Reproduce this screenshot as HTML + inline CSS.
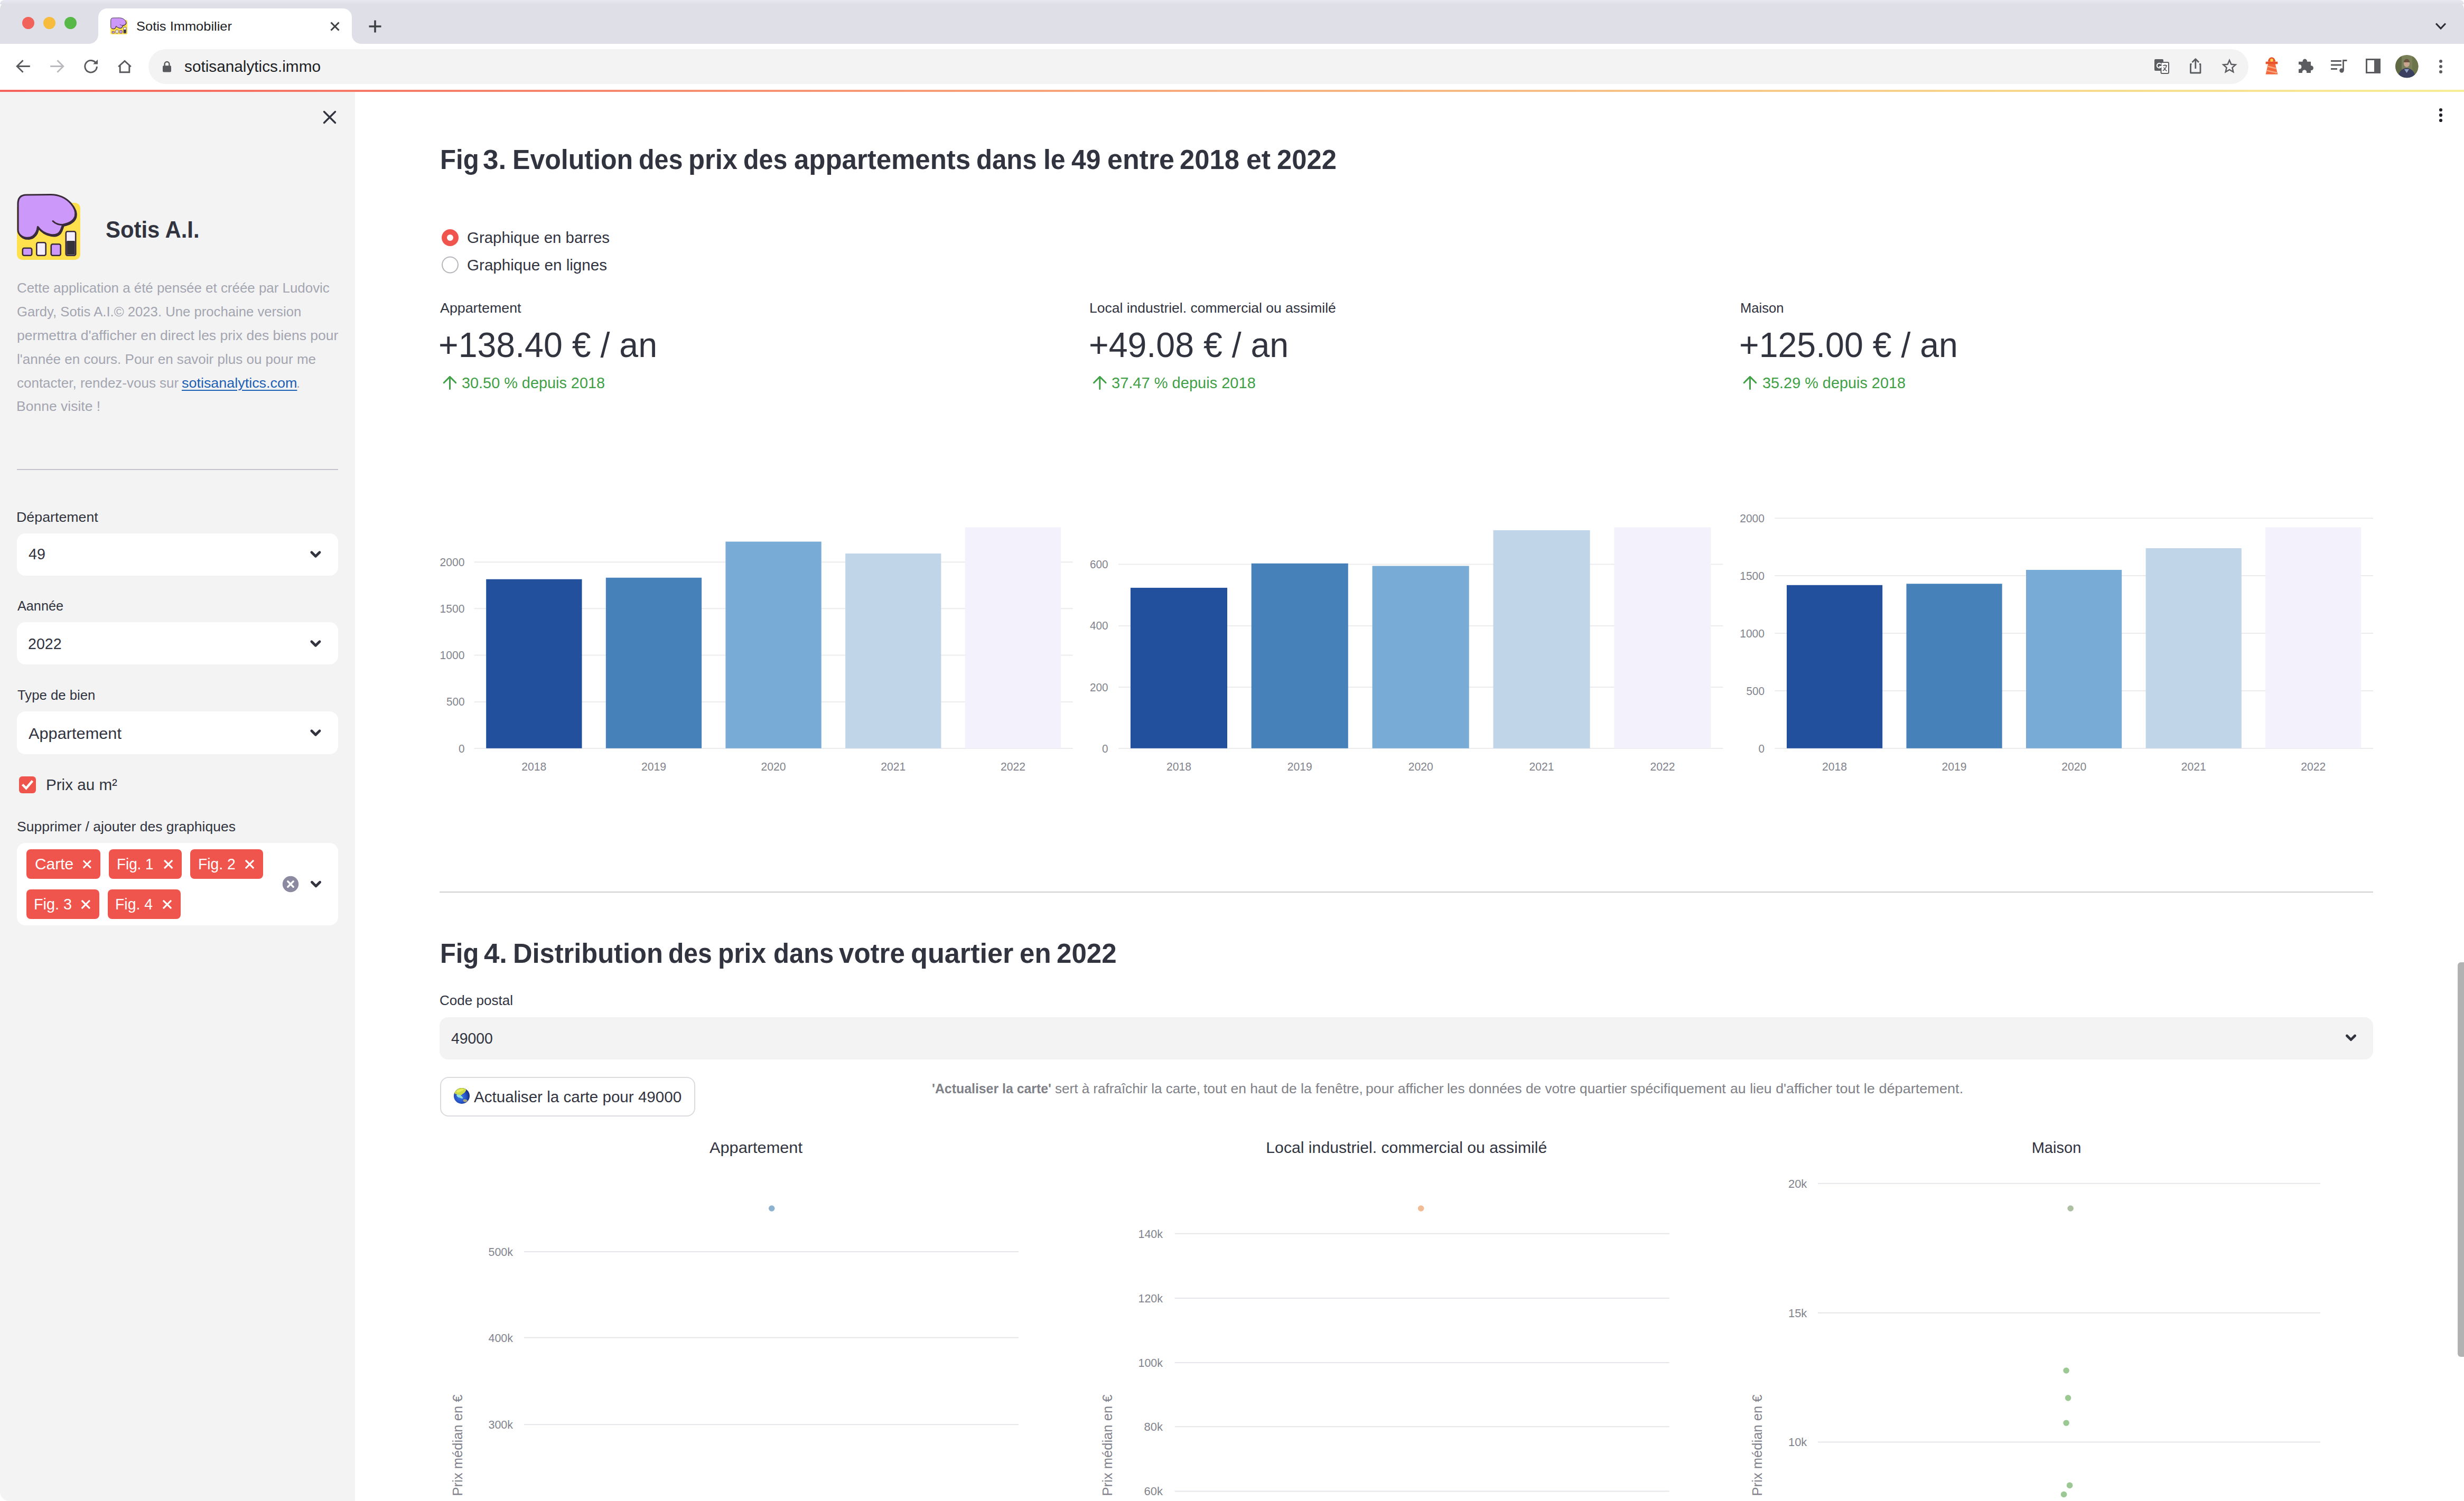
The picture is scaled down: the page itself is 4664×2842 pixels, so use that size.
<!DOCTYPE html>
<html lang="fr"><head><meta charset="utf-8"><meta name="viewport" content="width=4664"><title>Sotis Immobilier</title>
<style>
html,body{margin:0;padding:0}
body{width:4664px;height:2842px;position:relative;overflow:hidden;background:#fff;font-family:"Liberation Sans",sans-serif;color:#31333f}
div,span,svg,a{box-sizing:border-box}
.a{position:absolute}
.t{position:absolute;white-space:pre;line-height:1;transform-origin:0 0;display:block}
.t b{font-weight:700}
.lk{color:#1c60b3;text-decoration:underline;text-decoration-thickness:2px;text-underline-offset:4px}
.tabstrip{left:0;top:0;width:4664px;height:83px;background:#dfdfe8;border-radius:18px 18px 0 0}
.tabstrip:before{content:"";position:absolute;left:0;top:0;width:100%;height:8px;border-radius:18px 18px 0 0;background:linear-gradient(#e9e8f2,#dfdfe8)}
.tab{left:186px;top:16px;width:480px;height:67px;background:#fff;border-radius:17px 17px 0 0}
.tab:before,.tab:after{content:"";position:absolute;bottom:0;width:17px;height:17px;background:radial-gradient(circle at 0 0,transparent 16.5px,#fff 17px)}
.tab:before{left:-17px}
.tab:after{right:-17px;background:radial-gradient(circle at 100% 0,transparent 16.5px,#fff 17px)}
.tl{width:23px;height:23px;border-radius:50%;top:31.5px}
.toolbar{left:0;top:83px;width:4664px;height:87px;background:#fff}
.url{left:281px;top:93px;width:3975px;height:66px;border-radius:33px;background:#f3f3f4}
.deco{left:0;top:170px;width:4664px;height:4px;background:linear-gradient(90deg,#f5635c,#f7a078 40%,#f7ee96)}
.sidebar{left:0;top:174px;width:672px;height:2668px;background:#f3f3f3;border-radius:0 0 0 18px}
.hr{height:2px}
.sel{left:32px;width:608px;height:80.6px;border-radius:16px;background:#fff}
.tag{height:56px;border-radius:8px;background:#f0554d}
.msel{left:32px;top:1596px;width:608px;height:155.5px;border-radius:16px;background:#fff}
.psel{left:832px;top:1926.4px;width:3660px;height:79.2px;border-radius:16px;background:#f3f3f4}
.btn{left:832.5px;top:2039.2px;width:483px;height:74.8px;border-radius:16px;border:2px solid #dadbdf;background:#fff}
.cb{left:36px;top:1470px;width:32px;height:32px;border-radius:6px;background:#f0554d}
.sb{left:4652px;top:1822px;width:12px;height:747px;border-radius:6px 0 0 6px;background:#b2b2b2}
svg.icons,svg.charts{position:absolute;left:0;top:0;overflow:visible}

</style></head>
<body>
<div class="a tabstrip"></div>
<div class="a tl" style="left:42px;background:#f1625a"></div>
<div class="a tl" style="left:81.5px;background:#f7bb3e"></div>
<div class="a tl" style="left:122px;background:#57b848"></div>
<div class="a tab"></div>
<div class="a toolbar"></div>
<div class="a url"></div>
<div class="a deco"></div>
<div class="a sidebar"></div>
<div class="a hr" style="left:32px;top:887.8px;width:608px;background:#c3c2cd"></div>
<div class="a sel" style="top:1009.7px"></div>
<div class="a sel" style="top:1177.9px"></div>
<div class="a sel" style="top:1347px"></div>
<div class="a cb"></div>
<div class="a msel"></div>
<div class="a tag" style="left:50.2px;top:1608px;width:139.7px"></div>
<div class="a tag" style="left:205.9px;top:1608px;width:138px"></div>
<div class="a tag" style="left:360.1px;top:1608px;width:138px"></div>
<div class="a tag" style="left:50.2px;top:1684px;width:138px"></div>
<div class="a tag" style="left:204.2px;top:1684px;width:137.5px"></div>
<div class="a hr" style="left:832px;top:1687.9px;width:3660px;background:#cfcfd2"></div>
<div class="a psel"></div>
<div class="a btn"></div>
<div class="a sb"></div>
<svg class="icons" width="4664" height="2842" viewBox="0 0 4664 2842" fill="none">
<defs>
<g id="logo">
 <rect x="0" y="18" width="120" height="108" rx="10" fill="#ffe14e"/>
 <path d="M2 20 C2 8 8 3 18 3 L64 2.5 C78 2.5 92 8 102 19 C109 27 112 36 110.5 43 C108 52 100 57 87 59.5 C85 64 84.5 69 81 73.5 C77 78.5 70 79.5 64 78.5 C54 77 45 71 39.5 63.5 C39 69 37 76.5 30 81.5 C24 85.5 14 85.5 8 80.5 C3 77 2 73 2 69 Z" transform="translate(1.3 1.9)" fill="#3a2b3a" stroke="#3a2b3a" stroke-width="3.2" stroke-linejoin="round"/>
 <path d="M2 20 C2 8 8 3 18 3 L64 2.5 C78 2.5 92 8 102 19 C109 27 112 36 110.5 43 C108 52 100 57 87 59.5 C85 64 84.5 69 81 73.5 C77 78.5 70 79.5 64 78.5 C54 77 45 71 39.5 63.5 C39 69 37 76.5 30 81.5 C24 85.5 14 85.5 8 80.5 C3 77 2 73 2 69 Z" fill="#cc99fa" stroke="#3a2b3a" stroke-width="3.2" stroke-linejoin="round"/>
 <path d="M89 59.3 C81 60.5 72.500 57.500 68 52.500" stroke="#3a2b3a" stroke-width="3" stroke-linecap="round"/>
 <rect x="10.8" y="103.800" width="17.400" height="13.900" rx="3" fill="#cc99fa" stroke="#3a2b3a" stroke-width="2.6"/>
 <rect x="37.300" y="93.300" width="17.400" height="24.400" rx="3" fill="#f4eefd" stroke="#3a2b3a" stroke-width="2.6"/>
 <rect x="64.800" y="96.300" width="17.900" height="21.400" rx="3" fill="#cc99fa" stroke="#3a2b3a" stroke-width="2.6"/>
 <rect x="92.800" y="72.300" width="18.400" height="45.400" rx="3" fill="#f4eefd" stroke="#3a2b3a" stroke-width="2.6"/>
 <rect x="94.200" y="90" width="15.600" height="26.300" rx="1.5" fill="#35323a"/>
</g>
<g id="chev"><path d="M-7.6 -3.8 L0 3.8 L7.6 -3.8" stroke="#31333f" stroke-width="4.8" stroke-linecap="round" stroke-linejoin="round"/></g>
<g id="tagx"><path d="M-6.5 -6.5 L6.5 6.5 M6.5 -6.5 L-6.5 6.5" stroke="#fff" stroke-width="3.2" stroke-linecap="square"/></g>
<g id="up"><path d="M0 11.6 V-11.5 M-11.3 -0.3 L0 -11.6 L11.3 -0.3" stroke="#3fa046" stroke-width="3" stroke-linecap="round" stroke-linejoin="round"/></g>
</defs>
<!-- favicon -->
<use href="#logo" transform="translate(209.2 33.2) scale(0.266 0.252)"/>
<!-- tab close / new tab / tab search -->
<path d="M626.5 42.5 L641.5 57.5 M641.5 42.5 L626.5 57.5" stroke="#3c4043" stroke-width="3"/>
<path d="M698.5 50 H721.5 M710 38.5 V61.5" stroke="#3c4043" stroke-width="3.6"/>
<path d="M4611 44.5 L4620 54 L4629 44.5" stroke="#2b2c34" stroke-width="3.2"/>
<!-- nav icons -->
<path d="M56.8 125.5 H32.6 M43.6 114.2 L32.2 125.5 L43.6 136.8" stroke="#58595c" stroke-width="2.9" stroke-linejoin="miter"/>
<path d="M95.2 125.5 H119.4 M108.4 114.2 L119.8 125.5 L108.4 136.8" stroke="#b9babd" stroke-width="2.9"/>
<path d="M181.6 119.6 A11.3 11.3 0 1 0 183.4 126" stroke="#58595c" stroke-width="2.9"/>
<path d="M185 112.8 V121.6 H176.2 Z" fill="#58595c"/>
<path d="M224.2 126.2 L236 115.4 L247.800 126.2 M227.200 124 V136.800 H244.800 V124" stroke="#58595c" stroke-width="2.9" stroke-linejoin="miter"/>
<!-- lock -->
<rect x="308" y="124.3" width="16" height="12.2" rx="2" fill="#58595c"/>
<path d="M311.6 125 V121.4 A4.4 4.4 0 0 1 320.400 121.4 V125" stroke="#58595c" stroke-width="2.4"/>
<!-- translate -->
<rect x="4078" y="112" width="17" height="22" rx="2" fill="#5b5c60"/>
<rect x="4090.5" y="118" width="14.5" height="21" rx="2" fill="#fff" stroke="#5b5c60" stroke-width="2"/>
<path d="M4094 124 H4102 M4098 122 V124 M4101 124 C4100 129 4097 132 4094 134 M4095.5 127.5 C4097 131 4099 133 4101.500 134.5" stroke="#5b5c60" stroke-width="1.6"/>
<path d="M4090.500 121.5 A4.3 4.3 0 1 0 4091 126 H4087" stroke="#fff" stroke-width="2"/>
<!-- share -->
<path d="M4148.500 121.500 H4146.500 V138 H4165 V121.500 H4163 M4155.800 130 V112 M4149.500 118 L4155.800 111.700 L4162 118" stroke="#5b5c60" stroke-width="2.800" stroke-linejoin="round"/>
<!-- star -->
<path transform="translate(4220 125.6) scale(0.88) translate(-4220 -125.6)" d="M4220 112.500 L4223.800 121.300 L4233.300 122.100 L4226.100 128.400 L4228.300 137.700 L4220 132.800 L4211.700 137.700 L4213.900 128.400 L4206.700 122.100 L4216.200 121.300 Z" stroke="#5b5c60" stroke-width="2.800" stroke-linejoin="miter"/>
<!-- lighthouse ext --><g transform="translate(4300 127) scale(1.08 1.14) translate(-4300 -128.5)">
<path d="M4294 122 H4306 L4310.500 140.500 H4289.500 Z" fill="#f2683a"/>
<path d="M4292 127 L4308 131 M4290.500 134 L4309.500 138" stroke="#f9a57f" stroke-width="2.400"/>
<rect x="4289.500" y="119.500" width="21" height="4" fill="#e8532b"/>
<path d="M4293.500 119.500 A6.500 7.500 0 0 1 4306.500 119.500 Z" fill="#e8532b"/>
<circle cx="4300" cy="117" r="2.600" fill="#fbd54a"/></g>
<!-- puzzle -->
<path transform="translate(0 -2.2) translate(4362 127) scale(1 1.06) translate(-4362 -127)" d="M4351 119.500 H4358.500 A4.300 4.300 0 1 1 4367 119.500 H4374 V126.500 A4.300 4.300 0 1 1 4374 135 V139.500 H4366 A4.200 4.200 0 1 0 4358 139.500 H4351 V132.500 A4.200 4.200 0 1 0 4351 124.500 Z" fill="#5b5c60"/>
<!-- media -->
<path d="M4412 115.500 H4432 M4412 123 H4432 M4412 130.500 H4424" stroke="#5b5c60" stroke-width="2.800"/>
<path d="M4435.500 133 V114.500 H4442.500" stroke="#5b5c60" stroke-width="2.800"/>
<circle cx="4432.500" cy="133.500" r="4.200" fill="#5b5c60"/>
<!-- side panel -->
<rect x="4479.500" y="112.500" width="25" height="25" stroke="#5b5c60" stroke-width="3"/>
<rect x="4494" y="112.500" width="10.500" height="25" fill="#5b5c60"/>
<!-- avatar -->
<clipPath id="av"><circle cx="4555.800" cy="125.600" r="21.700"/></clipPath>
<g clip-path="url(#av)">
 <rect x="4534" y="103" width="44" height="46" fill="#7a8158"/>
 <rect x="4534" y="103" width="12" height="46" fill="#5f6a45"/><rect x="4566" y="103" width="12" height="46" fill="#6b7549"/>
 <ellipse cx="4555.500" cy="146" rx="16" ry="17" fill="#3a3f60"/>
 <ellipse cx="4555.500" cy="120" rx="5.600" ry="7" fill="#c9a690"/><path d="M4551 131 L4555.500 138 L4560 131 Z" fill="#8fa3c8"/>
 <path d="M4549.900 118 A5.600 6.500 0 0 1 4561.100 118 Z" fill="#6a5340"/>
</g>
<!-- chrome menu -->
<circle cx="4620" cy="116" r="3" fill="#5b5c60"/><circle cx="4620" cy="126" r="3" fill="#5b5c60"/><circle cx="4620" cy="136" r="3" fill="#5b5c60"/>
<!-- streamlit menu -->
<circle cx="4620" cy="208" r="3.1" fill="#222328"/><circle cx="4620" cy="217.900" r="3.1" fill="#222328"/><circle cx="4620" cy="228" r="3.1" fill="#222328"/>
<!-- sidebar close -->
<path d="M613.500 211.500 L634.500 232.500 M634.500 211.500 L613.500 232.500" stroke="#31333f" stroke-width="3.400" stroke-linecap="round"/>
<!-- logo -->
<use href="#logo" transform="translate(32 366)"/>
<!-- select chevrons -->
<use href="#chev" transform="translate(597.4 1049.5)"/>
<use href="#chev" transform="translate(597.4 1218.500)"/>
<use href="#chev" transform="translate(597.4 1387.500)"/>
<use href="#chev" transform="translate(598 1674)"/>
<use href="#chev" transform="translate(4450 1964.800)"/>
<!-- checkbox check -->
<path d="M42.500 1485.500 L49.500 1492.500 L61.500 1478.500" stroke="#fff" stroke-width="4.400" stroke-linecap="butt" stroke-linejoin="miter"/>
<!-- tag x -->
<use href="#tagx" transform="translate(164.800 1636.400) scale(0.92)"/>
<use href="#tagx" transform="translate(318.700 1636.400)"/>
<use href="#tagx" transform="translate(472.500 1636.400)"/>
<use href="#tagx" transform="translate(162.300 1712.400)"/>
<use href="#tagx" transform="translate(316.500 1712.400)"/>
<!-- clear all -->
<circle cx="550" cy="1674" r="15.200" fill="#8b8aa0"/>
<path d="M544.800 1668.800 L555.200 1679.200 M555.200 1668.800 L544.800 1679.200" stroke="#fff" stroke-width="3.400" stroke-linecap="round"/>
<!-- radios -->
<circle cx="852" cy="450" r="16" fill="#f0554d"/><circle cx="852" cy="450" r="6" fill="#fff"/>
<circle cx="852" cy="501.500" r="15" fill="#fff" stroke="#b4b5ba" stroke-width="2"/>
<!-- delta arrows -->
<use href="#up" transform="translate(851.500 725)"/>
<use href="#up" transform="translate(2081.800 725)"/>
<use href="#up" transform="translate(3312.500 725)"/>
<!-- globe -->
<radialGradient id="gl" cx="0.42" cy="0.55" r="0.62"><stop offset="0" stop-color="#3f7fe8"/><stop offset="0.6" stop-color="#2450c4"/><stop offset="1" stop-color="#15256f"/></radialGradient>
<clipPath id="gc"><circle cx="874" cy="2075" r="15"/></clipPath>
<circle cx="874" cy="2075" r="15" fill="url(#gl)"/>
<g clip-path="url(#gc)">
<path d="M860 2069 C861 2063 868 2059 875 2059.500 C880 2060 883 2062 882 2065 C880 2068 879 2070 876 2071 C873 2073 872 2076 869 2075 C866 2074 865 2071 862 2071.500 Z" fill="#c9d94a"/>
<path d="M864 2066 C868 2062 875 2061 879 2063 C876 2066 870 2067 866 2069 Z" fill="#e8ee5a"/>
<path d="M864 2073 C867 2072 871 2073 873 2075 C875 2077 877 2078 876 2080 C873 2080 871 2078 868 2078 C866 2077 864 2075 864 2073 Z" fill="#8fe0d8"/>
<path d="M877 2082 C880 2080.500 884 2081.500 884.500 2084 C884 2086.500 880 2087.500 878 2086 C876.500 2085 876 2083 877 2082 Z" fill="#a9a77a"/>
</g>
</svg>

<svg class="charts" width="4664" height="2842" viewBox="0 0 4664 2842" font-family="'Liberation Sans', sans-serif">
<line x1="897.5" x2="2030.7" y1="1064.3" y2="1064.3" stroke="#ebebee" stroke-width="2"/>
<line x1="897.5" x2="2030.7" y1="1152.2" y2="1152.2" stroke="#ebebee" stroke-width="2"/>
<line x1="897.5" x2="2030.7" y1="1240.6" y2="1240.6" stroke="#ebebee" stroke-width="2"/>
<line x1="897.5" x2="2030.7" y1="1328.8999999999999" y2="1328.8999999999999" stroke="#ebebee" stroke-width="2"/>
<line x1="897.5" x2="2030.7" y1="1417.1" y2="1417.1" stroke="#ebebee" stroke-width="2"/>
<rect x="920.2" y="1096.7" width="181.3" height="320.1" fill="#23509d"/>
<text x="1010.8" y="1458.5" font-size="22.32" fill="#82838c" text-anchor="middle" textLength="47" lengthAdjust="spacingAndGlyphs">2018</text>
<rect x="1146.8" y="1093.8" width="181.3" height="323.0" fill="#4781ba"/>
<text x="1237.5" y="1458.5" font-size="22.32" fill="#82838c" text-anchor="middle" textLength="47" lengthAdjust="spacingAndGlyphs">2019</text>
<rect x="1373.4" y="1025.5" width="181.3" height="391.3" fill="#78abd5"/>
<text x="1464.1" y="1458.5" font-size="22.32" fill="#82838c" text-anchor="middle" textLength="47" lengthAdjust="spacingAndGlyphs">2020</text>
<rect x="1600.1" y="1048" width="181.3" height="368.8" fill="#c0d6e8"/>
<text x="1690.7" y="1458.5" font-size="22.32" fill="#82838c" text-anchor="middle" textLength="47" lengthAdjust="spacingAndGlyphs">2021</text>
<rect x="1826.7" y="998.5" width="181.3" height="418.3" fill="#f3f2fc"/>
<text x="1917.4" y="1458.5" font-size="22.32" fill="#82838c" text-anchor="middle" textLength="47" lengthAdjust="spacingAndGlyphs">2022</text>
<text x="879.4" y="1071.8" font-size="22.32" fill="#82838c" text-anchor="end" textLength="46.8" lengthAdjust="spacingAndGlyphs">2000</text>
<text x="879.4" y="1159.7" font-size="22.32" fill="#82838c" text-anchor="end" textLength="46.8" lengthAdjust="spacingAndGlyphs">1500</text>
<text x="879.4" y="1248.1" font-size="22.32" fill="#82838c" text-anchor="end" textLength="46.8" lengthAdjust="spacingAndGlyphs">1000</text>
<text x="879.4" y="1336.3999999999999" font-size="22.32" fill="#82838c" text-anchor="end" textLength="34.5" lengthAdjust="spacingAndGlyphs">500</text>
<text x="879.4" y="1424.6" font-size="22.32" fill="#82838c" text-anchor="end" textLength="11.5" lengthAdjust="spacingAndGlyphs">0</text>
<line x1="2117" x2="3261.3" y1="1068.6" y2="1068.6" stroke="#ebebee" stroke-width="2"/>
<line x1="2117" x2="3261.3" y1="1184.8999999999999" y2="1184.8999999999999" stroke="#ebebee" stroke-width="2"/>
<line x1="2117" x2="3261.3" y1="1301.0" y2="1301.0" stroke="#ebebee" stroke-width="2"/>
<line x1="2117" x2="3261.3" y1="1417.1" y2="1417.1" stroke="#ebebee" stroke-width="2"/>
<rect x="2139.9" y="1112.9" width="183.1" height="303.9" fill="#23509d"/>
<text x="2231.4" y="1458.5" font-size="22.32" fill="#82838c" text-anchor="middle" textLength="47" lengthAdjust="spacingAndGlyphs">2018</text>
<rect x="2368.7" y="1066.8" width="183.1" height="350.0" fill="#4781ba"/>
<text x="2460.3" y="1458.5" font-size="22.32" fill="#82838c" text-anchor="middle" textLength="47" lengthAdjust="spacingAndGlyphs">2019</text>
<rect x="2597.6" y="1071.5" width="183.1" height="345.3" fill="#78abd5"/>
<text x="2689.2" y="1458.5" font-size="22.32" fill="#82838c" text-anchor="middle" textLength="47" lengthAdjust="spacingAndGlyphs">2020</text>
<rect x="2826.5" y="1003.9" width="183.1" height="412.9" fill="#c0d6e8"/>
<text x="2918.0" y="1458.5" font-size="22.32" fill="#82838c" text-anchor="middle" textLength="47" lengthAdjust="spacingAndGlyphs">2021</text>
<rect x="3055.3" y="998.5" width="183.1" height="418.3" fill="#f3f2fc"/>
<text x="3146.9" y="1458.5" font-size="22.32" fill="#82838c" text-anchor="middle" textLength="47" lengthAdjust="spacingAndGlyphs">2022</text>
<text x="2097.5" y="1076.1" font-size="22.32" fill="#82838c" text-anchor="end" textLength="34.5" lengthAdjust="spacingAndGlyphs">600</text>
<text x="2097.5" y="1192.3999999999999" font-size="22.32" fill="#82838c" text-anchor="end" textLength="34.5" lengthAdjust="spacingAndGlyphs">400</text>
<text x="2097.5" y="1308.5" font-size="22.32" fill="#82838c" text-anchor="end" textLength="34.5" lengthAdjust="spacingAndGlyphs">200</text>
<text x="2097.5" y="1424.6" font-size="22.32" fill="#82838c" text-anchor="end" textLength="11.5" lengthAdjust="spacingAndGlyphs">0</text>
<line x1="3359.3" x2="4492" y1="981.1999999999999" y2="981.1999999999999" stroke="#ebebee" stroke-width="2"/>
<line x1="3359.3" x2="4492" y1="1090.0" y2="1090.0" stroke="#ebebee" stroke-width="2"/>
<line x1="3359.3" x2="4492" y1="1199.0" y2="1199.0" stroke="#ebebee" stroke-width="2"/>
<line x1="3359.3" x2="4492" y1="1308.0" y2="1308.0" stroke="#ebebee" stroke-width="2"/>
<line x1="3359.3" x2="4492" y1="1417.1" y2="1417.1" stroke="#ebebee" stroke-width="2"/>
<rect x="3382.0" y="1107.8" width="181.2" height="309.0" fill="#23509d"/>
<text x="3472.6" y="1458.5" font-size="22.32" fill="#82838c" text-anchor="middle" textLength="47" lengthAdjust="spacingAndGlyphs">2018</text>
<rect x="3608.5" y="1105.3" width="181.2" height="311.5" fill="#4781ba"/>
<text x="3699.1" y="1458.5" font-size="22.32" fill="#82838c" text-anchor="middle" textLength="47" lengthAdjust="spacingAndGlyphs">2019</text>
<rect x="3835.0" y="1079" width="181.2" height="337.8" fill="#78abd5"/>
<text x="3925.7" y="1458.5" font-size="22.32" fill="#82838c" text-anchor="middle" textLength="47" lengthAdjust="spacingAndGlyphs">2020</text>
<rect x="4061.6" y="1038" width="181.2" height="378.8" fill="#c0d6e8"/>
<text x="4152.2" y="1458.5" font-size="22.32" fill="#82838c" text-anchor="middle" textLength="47" lengthAdjust="spacingAndGlyphs">2021</text>
<rect x="4288.1" y="998.5" width="181.2" height="418.3" fill="#f3f2fc"/>
<text x="4378.7" y="1458.5" font-size="22.32" fill="#82838c" text-anchor="middle" textLength="47" lengthAdjust="spacingAndGlyphs">2022</text>
<text x="3340" y="988.6999999999999" font-size="22.32" fill="#82838c" text-anchor="end" textLength="46.8" lengthAdjust="spacingAndGlyphs">2000</text>
<text x="3340" y="1097.5" font-size="22.32" fill="#82838c" text-anchor="end" textLength="46.8" lengthAdjust="spacingAndGlyphs">1500</text>
<text x="3340" y="1206.5" font-size="22.32" fill="#82838c" text-anchor="end" textLength="46.8" lengthAdjust="spacingAndGlyphs">1000</text>
<text x="3340" y="1315.5" font-size="22.32" fill="#82838c" text-anchor="end" textLength="34.5" lengthAdjust="spacingAndGlyphs">500</text>
<text x="3340" y="1424.6" font-size="22.32" fill="#82838c" text-anchor="end" textLength="11.5" lengthAdjust="spacingAndGlyphs">0</text>
<line x1="992" x2="1928.2" y1="2370" y2="2370" stroke="#e6e6ea" stroke-width="2"/>
<text x="971" y="2377.8" font-size="22.32" fill="#82838c" text-anchor="end" textLength="46.5" lengthAdjust="spacingAndGlyphs">500k</text>
<line x1="992" x2="1928.2" y1="2532.7" y2="2532.7" stroke="#e6e6ea" stroke-width="2"/>
<text x="971" y="2540.5" font-size="22.32" fill="#82838c" text-anchor="end" textLength="46.5" lengthAdjust="spacingAndGlyphs">400k</text>
<line x1="992" x2="1928.2" y1="2697.2" y2="2697.2" stroke="#e6e6ea" stroke-width="2"/>
<text x="971" y="2705.0" font-size="22.32" fill="#82838c" text-anchor="end" textLength="46.5" lengthAdjust="spacingAndGlyphs">300k</text>
<circle cx="1460.7" cy="2288" r="5.8" fill="#8fb2d0"/>
<text x="874.5" y="2832.5" font-size="26.04" fill="#82838c" text-anchor="start" textLength="192" lengthAdjust="spacingAndGlyphs" transform="rotate(-90 874.5 2832.5)">Prix médian en €</text>
<text x="1343" y="2182.9" font-size="29.76" fill="#31333f" text-anchor="start" textLength="176" lengthAdjust="spacingAndGlyphs">Appartement</text>
<line x1="2223.6" x2="3159.7" y1="2335.8" y2="2335.8" stroke="#e6e6ea" stroke-width="2"/>
<text x="2201" y="2343.6000000000004" font-size="22.32" fill="#82838c" text-anchor="end" textLength="46.5" lengthAdjust="spacingAndGlyphs">140k</text>
<line x1="2223.6" x2="3159.7" y1="2458.1" y2="2458.1" stroke="#e6e6ea" stroke-width="2"/>
<text x="2201" y="2465.9" font-size="22.32" fill="#82838c" text-anchor="end" textLength="46.5" lengthAdjust="spacingAndGlyphs">120k</text>
<line x1="2223.6" x2="3159.7" y1="2579.9" y2="2579.9" stroke="#e6e6ea" stroke-width="2"/>
<text x="2201" y="2587.7000000000003" font-size="22.32" fill="#82838c" text-anchor="end" textLength="46.5" lengthAdjust="spacingAndGlyphs">100k</text>
<line x1="2223.6" x2="3159.7" y1="2701.2" y2="2701.2" stroke="#e6e6ea" stroke-width="2"/>
<text x="2201" y="2709.0" font-size="22.32" fill="#82838c" text-anchor="end" textLength="35.5" lengthAdjust="spacingAndGlyphs">80k</text>
<line x1="2223.6" x2="3159.7" y1="2823.5" y2="2823.5" stroke="#e6e6ea" stroke-width="2"/>
<text x="2201" y="2831.3" font-size="22.32" fill="#82838c" text-anchor="end" textLength="35.5" lengthAdjust="spacingAndGlyphs">60k</text>
<circle cx="2689.7" cy="2288" r="5.8" fill="#f0bb95"/>
<text x="2104.8" y="2832.5" font-size="26.04" fill="#82838c" text-anchor="start" textLength="192" lengthAdjust="spacingAndGlyphs" transform="rotate(-90 2104.8 2832.5)">Prix médian en €</text>
<text x="2396.3" y="2182.9" font-size="29.76" fill="#31333f" text-anchor="start" textLength="532" lengthAdjust="spacingAndGlyphs">Local industriel. commercial ou assimilé</text>
<line x1="3441" x2="4392.2" y1="2240.7" y2="2240.7" stroke="#e6e6ea" stroke-width="2"/>
<text x="3420.4" y="2248.5" font-size="22.32" fill="#82838c" text-anchor="end" textLength="35.5" lengthAdjust="spacingAndGlyphs">20k</text>
<line x1="3441" x2="4392.2" y1="2485.8" y2="2485.8" stroke="#e6e6ea" stroke-width="2"/>
<text x="3420.4" y="2493.6000000000004" font-size="22.32" fill="#82838c" text-anchor="end" textLength="35.5" lengthAdjust="spacingAndGlyphs">15k</text>
<line x1="3441" x2="4392.2" y1="2730.4" y2="2730.4" stroke="#e6e6ea" stroke-width="2"/>
<text x="3420.4" y="2738.2000000000003" font-size="22.32" fill="#82838c" text-anchor="end" textLength="35.5" lengthAdjust="spacingAndGlyphs">10k</text>
<circle cx="3919.2" cy="2288" r="5.8" fill="#adc0a4"/>
<circle cx="3911.1" cy="2595" r="5.8" fill="#9cc993"/>
<circle cx="3914.6" cy="2646.9" r="5.8" fill="#9cc993"/>
<circle cx="3911.1" cy="2694.2" r="5.8" fill="#9cc993"/>
<circle cx="3917.6" cy="2812.4" r="5.8" fill="#9cc993"/>
<circle cx="3906.6" cy="2829.5" r="5.8" fill="#9cc993"/>
<text x="3334.8" y="2832.5" font-size="26.04" fill="#82838c" text-anchor="start" textLength="192" lengthAdjust="spacingAndGlyphs" transform="rotate(-90 3334.8 2832.5)">Prix médian en €</text>
<text x="3845.7" y="2182.9" font-size="29.76" fill="#31333f" text-anchor="start" textLength="93.6" lengthAdjust="spacingAndGlyphs">Maison</text>
</svg>
<span class="t" style="left:258.0px;top:37.5px;font-size:24px;color:#202124;transform:scaleX(1.0603);">Sotis Immobilier</span>
<span class="t" style="left:349.0px;top:111.5px;font-size:29px;color:#202124;transform:scaleX(1.0262);">sotisanalytics.immo</span>
<span class="t" style="left:200.2px;top:412.8px;font-size:44.64px;font-weight:700;color:#31333f;transform:scaleX(0.9382);">Sotis A.I.</span>
<span class="t" style="left:31.8px;top:532.2px;font-size:26.04px;color:#a3a5b0;transform:scaleX(0.9950);">Cette application a été pensée et créée par Ludovic</span>
<span class="t" style="left:31.8px;top:577.1px;font-size:26.04px;color:#a3a5b0;transform:scaleX(0.9868);">Gardy, Sotis A.I.© 2023. Une prochaine version</span>
<span class="t" style="left:31.8px;top:622.4px;font-size:26.04px;color:#a3a5b0;transform:scaleX(1.0177);">permettra d'afficher en direct les prix des biens pour</span>
<span class="t" style="left:31.8px;top:667.4px;font-size:26.04px;color:#a3a5b0;transform:scaleX(0.9993);">l'année en cours. Pour en savoir plus ou pour me</span>
<span class="t" style="left:30.8px;top:756.2px;font-size:26.04px;color:#a3a5b0;transform:scaleX(1.0181);">Bonne visite !</span>
<span class="t" style="left:31.8px;top:711.5px;font-size:26.04px;color:#a3a5b0;transform:scaleX(0.9982);">contacter, rendez-vous sur</span>
<span class="t" style="left:344.0px;top:711.5px;font-size:26.04px;color:#a3a5b0;transform:scaleX(1.0341);"><a class="lk">sotisanalytics.com</a></span>
<span class="t" style="left:561.2px;top:711.5px;font-size:26.04px;color:#a3a5b0;transform:scaleX(0.9676);">.</span>
<span class="t" style="left:30.8px;top:966.3px;font-size:26.04px;color:#31333f;transform:scaleX(1.0288);">Département</span>
<span class="t" style="left:54.2px;top:1034.4px;font-size:29.76px;color:#31333f;transform:scaleX(0.9620);">49</span>
<span class="t" style="left:32.8px;top:1133.8px;font-size:26.04px;color:#31333f;transform:scaleX(0.9694);">Aannée</span>
<span class="t" style="left:53.2px;top:1204.3px;font-size:29.76px;color:#31333f;transform:scaleX(0.9613);">2022</span>
<span class="t" style="left:32.8px;top:1303.0px;font-size:26.04px;color:#31333f;transform:scaleX(0.9888);">Type de bien</span>
<span class="t" style="left:54.2px;top:1373.6px;font-size:29.76px;color:#31333f;transform:scaleX(1.0332);">Appartement</span>
<span class="t" style="left:86.7px;top:1471.0px;font-size:29.76px;color:#31333f;transform:scaleX(0.9955);">Prix au m²</span>
<span class="t" style="left:31.8px;top:1551.5px;font-size:26.04px;color:#31333f;transform:scaleX(1.0179);">Supprimer / ajouter des graphiques</span>
<span class="t" style="left:65.6px;top:1620.8px;font-size:29.76px;color:#ffffff;transform:scaleX(1.0042);">Carte</span>
<span class="t" style="left:221.0px;top:1620.8px;font-size:29.76px;color:#ffffff;transform:scaleX(0.9343);">Fig. 1</span>
<span class="t" style="left:375.1px;top:1620.8px;font-size:29.76px;color:#ffffff;transform:scaleX(0.9506);">Fig. 2</span>
<span class="t" style="left:64.4px;top:1696.8px;font-size:29.76px;color:#ffffff;transform:scaleX(0.9695);">Fig. 3</span>
<span class="t" style="left:218.4px;top:1696.8px;font-size:29.76px;color:#ffffff;transform:scaleX(0.9550);">Fig. 4</span>
<span class="t" style="left:832.8px;top:276.4px;font-size:52.08px;font-weight:700;color:#31333f;transform:scaleX(0.9438);">Fig</span>
<span class="t" style="left:914.3px;top:276.4px;font-size:52.08px;font-weight:700;color:#31333f;transform:scaleX(1.0209);">3.</span>
<span class="t" style="left:970.0px;top:276.4px;font-size:52.08px;font-weight:700;color:#31333f;transform:scaleX(0.9618);">Evolution</span>
<span class="t" style="left:1208.5px;top:276.4px;font-size:52.08px;font-weight:700;color:#31333f;transform:scaleX(0.9296);">des</span>
<span class="t" style="left:1303.1px;top:276.4px;font-size:52.08px;font-weight:700;color:#31333f;transform:scaleX(0.9741);">prix</span>
<span class="t" style="left:1406.7px;top:276.4px;font-size:52.08px;font-weight:700;color:#31333f;transform:scaleX(0.9278);">des</span>
<span class="t" style="left:1503.1px;top:276.4px;font-size:52.08px;font-weight:700;color:#31333f;transform:scaleX(0.9783);">appartements</span>
<span class="t" style="left:1848.0px;top:276.4px;font-size:52.08px;font-weight:700;color:#31333f;transform:scaleX(0.9436);">dans</span>
<span class="t" style="left:1974.6px;top:276.4px;font-size:52.08px;font-weight:700;color:#31333f;transform:scaleX(0.9585);">le</span>
<span class="t" style="left:2028.0px;top:276.4px;font-size:52.08px;font-weight:700;color:#31333f;transform:scaleX(0.9549);">49</span>
<span class="t" style="left:2096.0px;top:276.4px;font-size:52.08px;font-weight:700;color:#31333f;transform:scaleX(0.9972);">entre</span>
<span class="t" style="left:2232.9px;top:276.4px;font-size:52.08px;font-weight:700;color:#31333f;transform:scaleX(0.9749);">2018</span>
<span class="t" style="left:2358.6px;top:276.4px;font-size:52.08px;font-weight:700;color:#31333f;transform:scaleX(0.9953);">et</span>
<span class="t" style="left:2417.0px;top:276.4px;font-size:52.08px;font-weight:700;color:#31333f;transform:scaleX(0.9749);">2022</span>
<span class="t" style="left:884.0px;top:435.3px;font-size:29.76px;color:#31333f;transform:scaleX(0.9894);">Graphique en barres</span>
<span class="t" style="left:884.0px;top:486.5px;font-size:29.76px;color:#31333f;transform:scaleX(0.9951);">Graphique en lignes</span>
<span class="t" style="left:832.5px;top:570.0px;font-size:26.04px;color:#31333f;transform:scaleX(1.0299);">Appartement</span>
<span class="t" style="left:2062.2px;top:570.0px;font-size:26.04px;color:#31333f;transform:scaleX(1.0179);">Local industriel. commercial ou assimilé</span>
<span class="t" style="left:3294.0px;top:570.0px;font-size:26.04px;color:#31333f;transform:scaleX(0.9839);">Maison</span>
<span class="t" style="left:830.0px;top:620.3px;font-size:66.96px;color:#31333f;transform:scaleX(0.9628);">+138.40 € / an</span>
<span class="t" style="left:2061.0px;top:620.3px;font-size:66.96px;color:#31333f;transform:scaleX(0.9630);">+49.08 € / an</span>
<span class="t" style="left:3292.0px;top:620.3px;font-size:66.96px;color:#31333f;transform:scaleX(0.9626);">+125.00 € / an</span>
<span class="t" style="left:874.0px;top:710.4px;font-size:29.76px;color:#3fa046;transform:scaleX(0.9695);">30.50 % depuis 2018</span>
<span class="t" style="left:2104.0px;top:710.4px;font-size:29.76px;color:#3fa046;transform:scaleX(0.9759);">37.47 % depuis 2018</span>
<span class="t" style="left:3336.0px;top:710.4px;font-size:29.76px;color:#3fa046;transform:scaleX(0.9695);">35.29 % depuis 2018</span>
<span class="t" style="left:833.1px;top:1778.9px;font-size:52.08px;font-weight:700;color:#31333f;transform:scaleX(0.9383);">Fig</span>
<span class="t" style="left:915.6px;top:1778.9px;font-size:52.08px;font-weight:700;color:#31333f;transform:scaleX(1.0136);">4.</span>
<span class="t" style="left:971.0px;top:1778.9px;font-size:52.08px;font-weight:700;color:#31333f;transform:scaleX(0.9714);">Distribution</span>
<span class="t" style="left:1264.5px;top:1778.9px;font-size:52.08px;font-weight:700;color:#31333f;transform:scaleX(0.9219);">des</span>
<span class="t" style="left:1358.9px;top:1778.9px;font-size:52.08px;font-weight:700;color:#31333f;transform:scaleX(0.9528);">prix</span>
<span class="t" style="left:1464.0px;top:1778.9px;font-size:52.08px;font-weight:700;color:#31333f;transform:scaleX(0.9404);">dans</span>
<span class="t" style="left:1588.0px;top:1778.9px;font-size:52.08px;font-weight:700;color:#31333f;transform:scaleX(0.9800);">votre</span>
<span class="t" style="left:1724.0px;top:1778.9px;font-size:52.08px;font-weight:700;color:#31333f;transform:scaleX(1.0027);">quartier</span>
<span class="t" style="left:1930.2px;top:1778.9px;font-size:52.08px;font-weight:700;color:#31333f;transform:scaleX(0.9799);">en</span>
<span class="t" style="left:1999.8px;top:1778.9px;font-size:52.08px;font-weight:700;color:#31333f;transform:scaleX(0.9809);">2022</span>
<span class="t" style="left:831.5px;top:1880.7px;font-size:26.04px;color:#31333f;transform:scaleX(1.0007);">Code postal</span>
<span class="t" style="left:854.0px;top:1950.5px;font-size:29.76px;color:#31333f;transform:scaleX(0.9537);">49000</span>
<span class="t" style="left:896.8px;top:2062.3px;font-size:29.76px;color:#31333f;transform:scaleX(0.9948);">Actualiser la carte pour 49000</span>
<span class="t" style="left:1764.2px;top:2048.0px;font-size:26.04px;font-weight:700;color:#808187;transform:scaleX(0.9550);"><b>'Actualiser la carte'</b></span>
<span class="t" style="left:1997.2px;top:2048.0px;font-size:26.04px;color:#808187;transform:scaleX(1.0002);">sert à rafraîchir la carte,</span>
<span class="t" style="left:2277.8px;top:2048.0px;font-size:26.04px;color:#808187;transform:scaleX(1.0176);">tout en haut de la fenêtre,</span>
<span class="t" style="left:2584.6px;top:2048.0px;font-size:26.04px;color:#808187;transform:scaleX(1.0241);">pour afficher</span>
<span class="t" style="left:2738.9px;top:2048.0px;font-size:26.04px;color:#808187;transform:scaleX(1.0086);">les données de votre quartier</span>
<span class="t" style="left:3085.9px;top:2048.0px;font-size:26.04px;color:#808187;transform:scaleX(1.0326);">spécifiquement</span>
<span class="t" style="left:3274.6px;top:2048.0px;font-size:26.04px;color:#808187;transform:scaleX(1.0261);">au lieu d'afficher</span>
<span class="t" style="left:3474.7px;top:2048.0px;font-size:26.04px;color:#808187;transform:scaleX(1.0417);">tout le département.</span>
</body></html>
